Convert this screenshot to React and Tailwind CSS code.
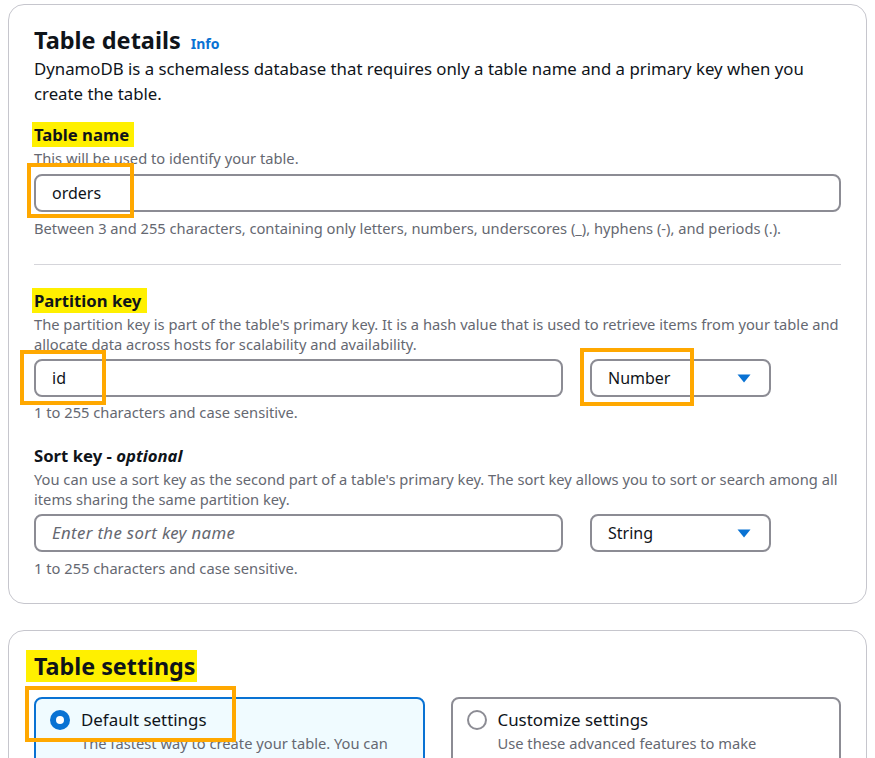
import React from 'react'

const Mark = ({ children, className = '' }) => (
  <span className={`bg-[#fff000] ${className}`}>{children}</span>
)

const Outline = ({ className }) => (
  <div className={`pointer-events-none absolute z-10 border-4 border-[#ffa800] ${className}`} />
)

const Caret = () => (
  <svg width="14" height="9" viewBox="0 0 14 9" className="shrink-0">
    <path d="M0.5 0.5 L13.5 0.5 L7 8.5 Z" fill="#0972d3" />
  </svg>
)

const TextInput = ({ value, placeholder }) => (
  <div className="flex h-[38px] items-center rounded-lg border-2 border-[#8c8c94] bg-white px-4 text-base">
    {value ? (
      <span className="text-[#0f141a]">{value}</span>
    ) : (
      <span className="text-[16.8px] italic tracking-[0.35px] text-[#656871]">{placeholder}</span>
    )}
  </div>
)

const Select = ({ value }) => (
  <div className="flex h-[38px] items-center justify-between rounded-lg border-2 border-[#8c8c94] bg-white pl-4 pr-[18px] text-base text-[#0f141a]">
    <span>{value}</span>
    <Caret />
  </div>
)

const Hint = ({ children, className = '' }) => (
  <p className={`text-[14.7px] leading-5 text-[#656871] ${className}`}>{children}</p>
)

const Label = ({ children, className = '' }) => (
  <div className={`text-[16.7px] font-bold leading-[22px] text-[#0f141a] ${className}`}>{children}</div>
)

const Radio = ({ checked }) =>
  checked ? (
    <span className="flex h-5 w-5 shrink-0 items-center justify-center rounded-full bg-[#0972d3]">
      <span className="h-2 w-2 rounded-full bg-white" />
    </span>
  ) : (
    <span className="h-5 w-5 shrink-0 rounded-full border-2 border-[#8c8c94] bg-white" />
  )

const Option = ({ checked, title, desc, children }) => (
  <div
    className={`relative rounded-lg border-2 pl-[14px] pr-4 pt-[10px] pb-4 ${
      checked ? 'border-[#0972d3] bg-[#f0fbff]' : 'border-[#8c8c94] bg-white'
    }`}
  >
    {children}
    <div className="flex items-center gap-[11px]">
      <Radio checked={checked} />
      <span className="text-[16.9px] leading-[22px] text-[#0f141a]">{title}</span>
    </div>
    <p className="mt-[2px] pl-[31px] text-[14.7px] leading-5 text-[#656871]">{desc}</p>
  </div>
)

export default function App() {
  return (
    <div
      className="min-h-[758px] bg-white px-2 pt-1 pb-8 text-[#0f141a]"
      style={{ fontFamily: '"Noto Sans", "Open Sans", sans-serif' }}
    >
      {/* Table details */}
      <section className="rounded-2xl border border-[#c6c6cd] px-[25px] pt-5 pb-[25px]">
        <div className="flex items-baseline gap-[10px]">
          <h2 className="text-[23.5px] font-bold leading-[30px]">Table details</h2>
          <span className="text-sm font-bold text-[#0972d3]">Info</span>
        </div>
        <p className="mt-[1px] text-[16.8px] leading-[25px]">
          DynamoDB is a schemaless database that requires only a table name and a primary key when you create the table.
        </p>

        <Label className="mt-[18px]">
          <Mark className="py-[1px] pr-[5px] -ml-[2px] pl-[2px]">Table name</Mark>
        </Label>
        <Hint className="mt-[2px]">This will be used to identify your table.</Hint>
        <div className="relative mt-[6px]">
          <TextInput value="orders" />
          <Outline className="-left-[7px] -top-[11px] h-[55px] w-[107px]" />
        </div>
        <Hint className="mt-[6px]">
          Between 3 and 255 characters, containing only letters, numbers, underscores (_), hyphens (-), and periods (.).
        </Hint>

        <hr className="mt-[26px] border-[#d5d5da]" />

        <Label className="mt-[25px]">
          <Mark className="py-[1px] pr-[6px] -ml-[2px] pl-[2px]">Partition key</Mark>
        </Label>
        <Hint className="mt-[2px]">
          The partition key is part of the table's primary key. It is a hash value that is used to retrieve items from your table and allocate data across hosts for scalability and availability.
        </Hint>
        <div className="mt-[5px] flex gap-[27px]">
          <div className="relative w-[529px]">
            <TextInput value="id" />
            <Outline className="-left-[14px] -top-[9px] h-[55px] w-[86px]" />
          </div>
          <div className="relative w-[181px]">
            <Select value="Number" />
            <Outline className="-left-[10px] -top-[11px] h-[58px] w-[114px]" />
          </div>
        </div>
        <Hint className="mt-[5px]">1 to 255 characters and case sensitive.</Hint>

        <Label className="mt-[23px]">
          Sort key - <span className="italic">optional</span>
        </Label>
        <Hint className="mt-[2px]">
          You can use a sort key as the second part of a table's primary key. The sort key allows you to sort or search among all items sharing the same partition key.
        </Hint>
        <div className="mt-[5px] flex gap-[27px]">
          <div className="w-[529px]">
            <TextInput placeholder="Enter the sort key name" />
          </div>
          <div className="w-[181px]">
            <Select value="String" />
          </div>
        </div>
        <Hint className="mt-[6px]">1 to 255 characters and case sensitive.</Hint>
      </section>

      {/* Table settings */}
      <section className="mt-[26px] rounded-2xl border border-[#c6c6cd] px-[25px] pt-5 pb-6">
        <h2 className="text-[23.3px] font-bold leading-[30px]">
          <Mark className="-ml-[8px] pl-[8px] pr-[1px]">Table settings</Mark>
        </h2>
        <div className="mt-4 grid grid-cols-2 gap-[26px]">
          <Option
            checked
            title="Default settings"
            desc="The fastest way to create your table. You can modify most of these settings after your table has been created."
          >
            <Outline className="-left-[11px] -top-[13px] h-[56px] w-[211px]" />
          </Option>
          <Option
            title="Customize settings"
            desc="Use these advanced features to make DynamoDB work better for your needs."
          />
        </div>
      </section>
    </div>
  )
}
